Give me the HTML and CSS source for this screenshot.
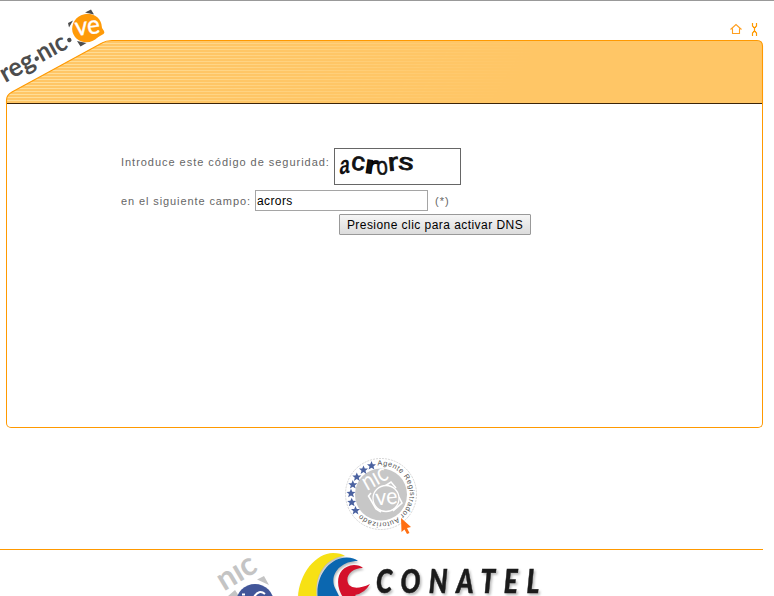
FILE: index.html
```html
<!DOCTYPE html>
<html lang="es">
<head>
<meta charset="utf-8">
<title>reg.nic.ve</title>
<link rel="stylesheet" href="styles.css">
</head>
<body>
<header class="header">
<svg class="banner" width="774" height="104" viewBox="0 0 774 104">
  <defs>
    <pattern id="lines" y="1" width="3" height="3" patternUnits="userSpaceOnUse"><rect width="3" height="1" fill="#ffe3a4"/></pattern>
    <linearGradient id="fade" gradientUnits="userSpaceOnUse" x1="60" y1="0" x2="430" y2="230"><stop offset="0" stop-color="#ddd"/><stop offset="1" stop-color="#000"/></linearGradient>
    <mask id="fadeMask"><rect width="774" height="104" fill="url(#fade)"/></mask>
  </defs>
  <path d="M0 .5H774" stroke="#999"/>
  <path d="M6.500 104V100Q6.500 95 12 92L102 43Q106 40.500 112 40.500H757Q762.500 40.500 762.500 46V104Z" fill="#ffc666"/>
  <path d="M6.500 104V100Q6.500 95 12 92L102 43Q106 40.500 112 40.500H757Q762.500 40.500 762.500 46V104Z" fill="url(#lines)" mask="url(#fadeMask)"/>
  <path d="M6.500 104V100Q6.500 95 12 92L102 43Q106 40.500 112 40.500H757Q762.500 40.500 762.500 46V104" fill="none" stroke="#f90" stroke-width="1.100"/>
  <path d="M7 103.500H762" stroke="#3b2408"/>
  <g transform="translate(6 82.500) rotate(-29)">
    <text class="logo-text" x="-1" y="0" textLength="36" lengthAdjust="spacingAndGlyphs">reg</text>
    <circle cx="38.500" cy="-6" r="2.200" fill="#4d4d4d"/>
    <text class="logo-text" x="41" y="0" textLength="31" lengthAdjust="spacingAndGlyphs">nıc</text>
    <circle cx="76" cy="-6.500" r="2.200" fill="#4d4d4d"/>
  </g>
  <path d="M69 27.500L68 23L73 20.500ZM85 12.500L91 9.500L94 14.500ZM77 41L80.500 46.500L86.500 43Z" fill="#4d4d4d"/>
  <path d="M93 40L103.500 34Q105 33 104 31L100 25Z" fill="#ff9a08"/>
  <ellipse cx="87" cy="28" rx="15" ry="14" transform="rotate(-25 87 28)" fill="#ff9a08"/>
  <text class="logo-ve" transform="translate(76 36) rotate(-7)" textLength="25" lengthAdjust="spacingAndGlyphs">ve</text>
  <path d="M730.500 29.500L736 24.500L741.500 29.500M732.500 28.500V33.500H739.500V28.500" fill="none" stroke="#ff9f20" stroke-width="1.100"/>
  <path d="M752.500 23V26L754.500 28V31L752.500 33V36M756.500 23V26L754.500 28M754.500 31L756.500 33V36M753 27.500H756M753 31.500H756" fill="none" stroke="#ff9900" stroke-width="1.200"/>
</svg>
</header>
<main class="panel">
  <form class="form">
    <div class="row row-code">
      <span class="code-label">Introduce este código de seguridad:</span>
      <span class="captcha">
        <svg width="125" height="35" viewBox="0 0 125 35">
          <g class="captcha-text">
            <text transform="translate(4 25.500) rotate(-10) skewX(-14)" font-size="25" textLength="10.500" lengthAdjust="spacingAndGlyphs">a</text>
            <text transform="translate(15.500 20) rotate(8)" font-size="25" font-weight="400" stroke="#111" stroke-width=".8" textLength="13.500" lengthAdjust="spacingAndGlyphs">c</text>
            <text transform="translate(29 23.500) rotate(8)" font-size="25" stroke="#000" stroke-width="1" textLength="13" lengthAdjust="spacingAndGlyphs">r</text>
            <text transform="translate(42 26) rotate(-5)" font-size="25" font-weight="400" stroke="#111" stroke-width=".5" textLength="11.500" lengthAdjust="spacingAndGlyphs">o</text>
            <text transform="translate(53.500 22) rotate(-5)" font-size="25" font-weight="400" stroke="#111" stroke-width=".9" textLength="10.500" lengthAdjust="spacingAndGlyphs">r</text>
            <text transform="translate(63 20) rotate(5)" font-size="23" font-weight="400" stroke="#111" stroke-width=".9" textLength="15" lengthAdjust="spacingAndGlyphs">s</text>
          </g>
        </svg>
      </span>
    </div>
    <div class="row row-field">
      <label class="field-label" for="code">en el siguiente campo:</label>
      <input id="code" class="field" type="text" value="acrors">
      <span class="required">(*)</span>
    </div>
    <button class="submit" type="button">Presione clic para activar DNS</button>
  </form>
</main>
<div class="seal">
<svg width="76" height="80" viewBox="343 456 76 80">
  <defs>
    <path id="ring" d="M377.500 465.700A28.500 28.500 0 1 1 359 512"/>
    <path id="star" d="M0-4.600L1.300-1.500L4.500-1.400L2 .7L2.900 3.900L0 2.100L-2.900 3.900L-2 .7L-4.500-1.400L-1.300-1.500Z" fill="#4b62a0"/>
  </defs>
  <circle cx="381" cy="494" r="35.500" fill="#fff" stroke="#ccc" stroke-width=".8" stroke-dasharray="2 1"/>
  <circle cx="381" cy="494.500" r="26" fill="#c7c7c7"/>
  <text class="ring-text"><textPath href="#ring" textLength="115">Agente Registrador Autorizado</textPath></text>
  <use href="#star" x="355.500" y="510.500"/><use href="#star" x="351.700" y="502.300"/><use href="#star" x="351" y="493.300"/><use href="#star" x="352.800" y="484.700"/><use href="#star" x="356.800" y="477"/><use href="#star" x="363.500" y="470"/><use href="#star" x="371.500" y="465.700"/>
  <text class="seal-nic" transform="translate(367 491) rotate(-29)" textLength="26" lengthAdjust="spacingAndGlyphs">nıc</text>
  <path d="M371 493L368.500 496L376 509L381 512M385 486L391 482L396 488M399 497L402 503L393 511" stroke="#fff" stroke-width="1.600" fill="none"/>
  <circle cx="386" cy="498.500" r="13" fill="#c7c7c7" stroke="#fff" stroke-width="1.300"/>
  <text class="seal-ve" transform="translate(376 505.500) rotate(-5)" textLength="22" lengthAdjust="spacingAndGlyphs">ve</text>
  <path d="M401 518L411 527L407 528L409.500 533L407 534L404.500 529.500L401.500 532Z" fill="#ff6f12"/>
</svg>
</div>
<footer class="footer">
<svg width="774" height="46" viewBox="0 550 774 46">
  <text class="foot-nic" transform="translate(224 591.500) rotate(-31)" textLength="41" lengthAdjust="spacingAndGlyphs">nıc</text>
  <path d="M228 596L235 590L239 596ZM257 579.500L264 576L269 585Z" fill="#c4c4c4"/>
  <circle cx="255" cy="603" r="19" fill="#425699"/>
  <path d="M242 594.500H245M254 597Q259 589 265 594" fill="none" stroke="#fff" stroke-width="2"/>
  <g class="swoosh">
    <path d="M298 600C298 574 316 553 333 553Q341 553 345 556C329 557 313 571 317 600Z" fill="#f7e114"/>
    <path d="M318 600C314 575 331 557 347 557.500Q354 557.500 358 561C340 561 329 575 335 588L341 600Z" fill="#0b67b0"/>
    <path d="M345 600C333 585 337 566 354 565Q360 565 363 568C351 568 344 577 349 585Q355 591 370 584Q365 593 355 595Q357 598 362 600Z" fill="#d4112b"/>
  </g>
  <text class="conatel" transform="translate(376 592.500) scale(.82 1)" textLength="199">CONATEL</text>
</svg>
</footer>
</body>
</html>
```
FILE: styles.css
```css
* { box-sizing: border-box; }
html, body { height: 100%; }
body {
  margin: 0;
  overflow: hidden;
  background: #fff;
  color: #666;
  font: 11px "Liberation Sans", Arial, sans-serif;
}
svg { display: block; overflow: visible; }
.logo-text { font: 700 26px Lato, sans-serif; fill: #4d4d4d; }
.logo-ve { font: 400 26px Lato, sans-serif; fill: #fff; stroke: #fff; stroke-width: .4px; }
.panel {
  width: 757px;
  height: 324px;
  margin-left: 6px;
  padding: 44px 0 0 114px;
  border: solid #f90;
  border-width: 0 1px 1px;
  border-radius: 0 0 5px 5px;
}
.form { width: 411px; letter-spacing: 1px; }
.row { display: flex; white-space: nowrap; }
.row-code { height: 42px; line-height: 28px; }
.code-label { width: 209px; letter-spacing: .97px; }
.field-label { width: 130px; letter-spacing: .9px; }
.captcha {
  width: 127px;
  height: 37px;
  margin-left: 4px;
  border: 1px solid #666;
}
.captcha-text {
  font-family: "Liberation Sans", sans-serif;
  font-weight: 700;
  letter-spacing: 0;
  fill: #111;
}
.row-field { height: 24px; line-height: 23px; }
.field {
  width: 173px;
  height: 21px;
  margin: 0 7px 0 4px;
  padding: 0 1px;
  border: 1px solid #a5a5a5;
  color: #000;
  font: 12px "Liberation Sans", Arial, sans-serif;
  letter-spacing: .4px;
}
.submit {
  display: block;
  width: 192px;
  height: 21px;
  margin-left: 218px;
  padding: 0;
  border: 1px solid #999;
  border-radius: 1px;
  background: linear-gradient(#f5f5f5, #dcdcdc);
  color: #000;
  font: 12px "Liberation Sans", Arial, sans-serif;
  letter-spacing: .45px;
}
.seal {
  width: 763px;
  height: 122px;
  padding: 28px 0 0 343px;
  border-bottom: 1px solid #f90;
}
.ring-text { font: 7.3px "Liberation Sans", sans-serif; fill: #555; }
.seal-nic { font: 25px Lato, sans-serif; fill: #fff; }
.seal-ve { font: 23px Lato, sans-serif; fill: #fff; }
.foot-nic { font: 700 32px Lato, sans-serif; fill: #c4c4c4; }
.swoosh { filter: drop-shadow(1px 2px 1px #bbb); }
.conatel {
  font: italic 900 32px Lato, sans-serif;
  fill: #1b1b1b;
  stroke: #1b1b1b;
  stroke-width: .5px;
  filter: drop-shadow(2px 2px 1px #bbb);
}
```
